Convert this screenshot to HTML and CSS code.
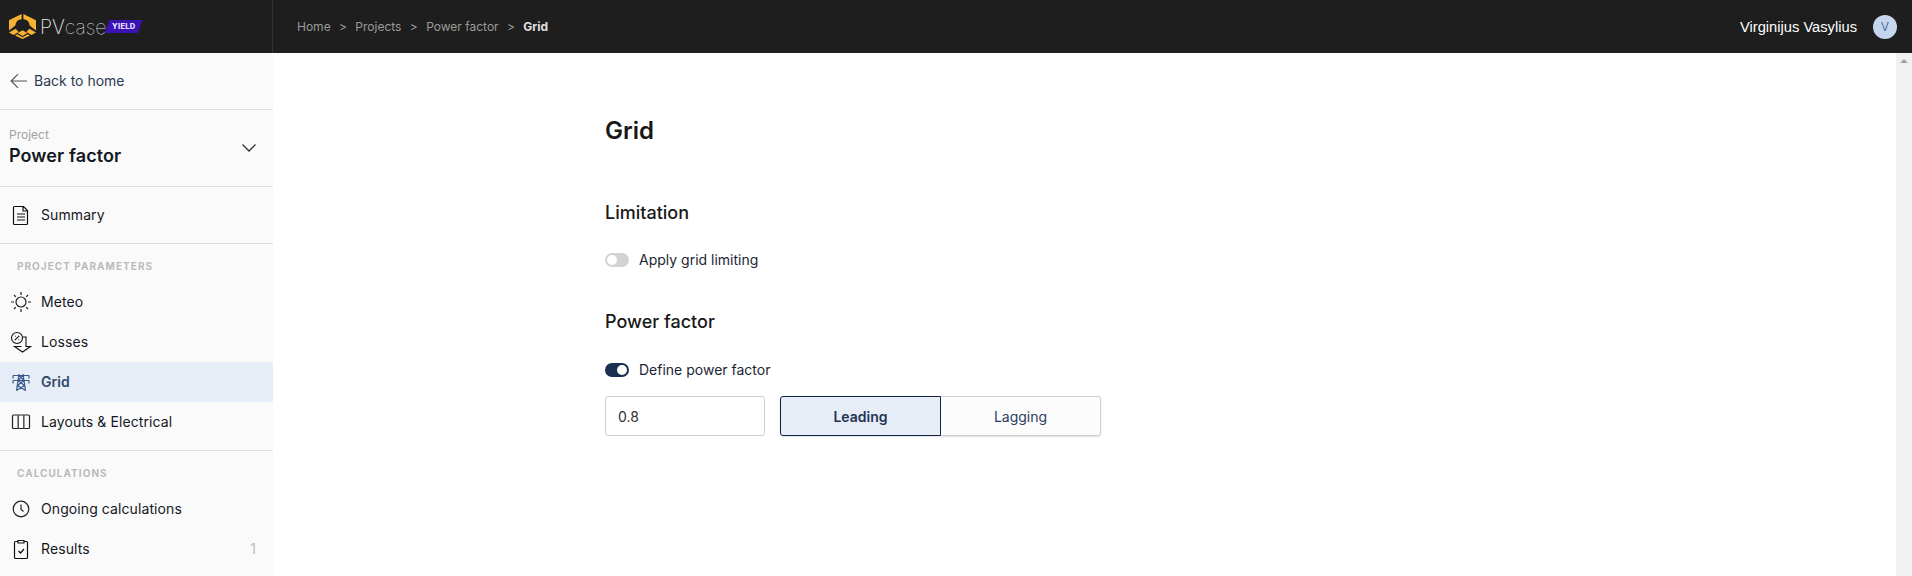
FILE: index.html
```html
<!DOCTYPE html>
<html lang="en">
<head>
<meta charset="utf-8">
<title>Grid</title>
<link rel="stylesheet" href="styles.css">
</head>
<body>
<header class="topbar">
  <div class="brand">
    <svg class="logo-mark" width="27" height="25" viewBox="0 0 27 25">
      <path fill="#f5b335" d="M12.600 0v5.300a7 7 0 0 0-6.300 6.200L0 16.500V6.300z"/>
      <path fill="#f5b335" d="M14.400 0v5.300a7 7 0 0 1 6.300 6.200L27 16.500V6.300z"/>
      <path fill="#f5b335" d="M0 18.400l6.700-3.700 3 3.200-5.200 3z"/>
      <path fill="#f5b335" d="M27 18.400l-6.700-3.700-3 3.200 5.200 3z"/>
      <path fill="#f5b335" d="M13.500 16.200l4.900 2.900-4.900 2.800-4.900-2.800z"/>
      <path fill="#f5b335" d="M6 21.400l7.500 3.600 7.500-3.600-2.200-1.200-5.300 3-5.300-3z"/>
    </svg>
    <span class="logo-word"><span class="logo-pv">PV</span>case</span>
    <span class="logo-tag"><span class="logo-tag-text">YIELD</span></span>
  </div>
  <nav class="crumbs">
    <span>Home</span><span class="sep">&gt;</span>
    <span>Projects</span><span class="sep">&gt;</span>
    <span>Power factor</span><span class="sep">&gt;</span>
    <span class="crumb-current">Grid</span>
  </nav>
  <div class="user">
    <span class="user-name">Virginijus Vasylius</span>
    <span class="avatar">V</span>
  </div>
</header>
<div class="shell">
  <aside class="sidebar">
    <div class="back">
      <svg width="18" height="16" viewBox="0 0 18 16" fill="none" stroke="#555" stroke-width="1.2"><path d="M17 8H1.500M8 1.200L1.200 8 8 14.800"/></svg>
      <span class="label">Back to home</span>
    </div>
    <div class="project">
      <div class="project-text">
        <div class="project-label">Project</div>
        <div class="project-name">Power factor</div>
      </div>
      <svg width="16" height="10" viewBox="0 0 16 10" fill="none" stroke="#333" stroke-width="1.3"><path d="M1.500 1.500L8 8l6.500-6.500"/></svg>
    </div>
    <div class="section section-summary">
      <a class="item">
        <svg class="icon" width="24" height="24" viewBox="0 0 24 24" fill="none" stroke="#111" stroke-width="1.2"><path d="M5.500 3.500h9l4 4v13a1 1 0 0 1-1 1h-12a1 1 0 0 1-1-1v-16a1 1 0 0 1 1-1zM14 3.500v4.500h4.500M8 11h8M8 14h8M8 17h8"/></svg>
        <span class="label">Summary</span>
      </a>
    </div>
    <div class="section">
      <div class="section-title">Project parameters</div>
      <a class="item">
        <svg class="icon" width="24" height="24" viewBox="0 0 24 24" fill="none" stroke="#222" stroke-width="1.2"><circle cx="12" cy="12" r="5"/><path d="M12 2v3M12 19v3M2 12h3M19 12h3M5 5l1.800 1.800M17.200 17.200L19 19M5 19l1.800-1.800M17.200 6.800L19 5"/></svg>
        <span class="label">Meteo</span>
      </a>
      <a class="item">
        <svg class="icon" width="24" height="24" viewBox="0 0 24 24" fill="none" stroke="#111" stroke-width="1.1"><circle cx="8" cy="8" r="5.500"/><path d="M5.800 10.200L10.200 5.800M6 6.300h.7M9.500 9.700h.7M14 7h3v9.500h4.500L13.500 22l-8-5.500h7"/></svg>
        <span class="label">Losses</span>
      </a>
      <a class="item item-active">
        <svg class="icon" width="24" height="24" viewBox="0 0 24 24" fill="none" stroke="#3a5a88" stroke-width="1.200"><path d="M4 5.500h16M4 10.500h16M4 5.500v3M20 5.500v3M4 10.500v3M20 10.500v3M10 4L7.500 20.500M14 4l2.500 16.500M10 5.500l5 5-6.500 5 8 5M14 5.500l-5 5 6.500 5-8 5"/></svg>
        <span class="label">Grid</span>
      </a>
      <a class="item">
        <svg class="icon" width="24" height="24" viewBox="0 0 24 24" fill="none" stroke="#222" stroke-width="1.2"><rect x="3.500" y="5" width="17" height="13.500" rx="1"/><path d="M9.200 5v13.500M14.800 5v13.500" stroke-width="1.600" stroke="#555"/></svg>
        <span class="label">Layouts &amp; Electrical</span>
      </a>
    </div>
    <div class="section section-last">
      <div class="section-title">Calculations</div>
      <a class="item">
        <svg class="icon" width="24" height="24" viewBox="0 0 24 24" fill="none" stroke="#222" stroke-width="1.2"><circle cx="12" cy="12" r="7.800"/><path d="M12 7.500v5l2.500 2"/></svg>
        <span class="label">Ongoing calculations</span>
      </a>
      <a class="item">
        <svg class="icon" width="24" height="24" viewBox="0 0 24 24" fill="none" stroke="#111" stroke-width="1.2"><path d="M9 4.500H6.500a1 1 0 0 0-1 1v15a1 1 0 0 0 1 1h11a1 1 0 0 0 1-1v-15a1 1 0 0 0-1-1H15M9 3.500h6v2.500H9zM9.500 14l2 2 3.500-4"/></svg>
        <span class="label">Results</span>
        <span class="label count">1</span>
      </a>
    </div>
  </aside>
  <main class="content">
    <h1 class="page-title">Grid</h1>
    <h2 class="group-title group-limit">Limitation</h2>
    <div class="switch-row">
      <span class="switch"></span>
      <span class="label">Apply grid limiting</span>
    </div>
    <h2 class="group-title group-power">Power factor</h2>
    <div class="switch-row">
      <span class="switch switch-on"></span>
      <span class="label">Define power factor</span>
    </div>
    <div class="controls">
      <div class="field">0.8</div>
      <div class="segments">
        <span class="segment segment-on">Leading</span>
        <span class="segment">Lagging</span>
      </div>
    </div>
  </main>
  <div class="scrollbar"><span class="scroll-arrow"></span></div>
</div>
</body>
</html>
```
FILE: styles.css
```css
* { box-sizing: border-box; }
html, body { margin: 0; height: 100%; overflow: hidden; }
body {
  font-family: Inter, "Liberation Sans", sans-serif;
  font-size: 14px;
  color: #14181f;
  background: #fff;
  display: flex;
  flex-direction: column;
}
.label { margin-bottom: 2px; }
.topbar {
  height: 53px;
  flex: none;
  background: #1e1e1e;
  color: #fff;
  display: flex;
  align-items: center;
}
.brand {
  width: 273px;
  height: 100%;
  flex: none;
  border-right: 1px solid #333;
  display: flex;
  align-items: center;
  padding-left: 9px;
}
.logo-mark { flex: none; }
.logo-word {
  font-family: Inter, sans-serif;
  font-weight: 100;
  font-size: 19.500px;
  color: #e4e4e4;
  margin-left: 4px;
  width: 65px;
  flex: none;
}
.logo-pv { font-weight: 200; }
.logo-tag {
  width: 33px;
  height: 13px;
  margin-left: 2px;
  background: #3b12b4;
  transform: skewX(-20deg);
  display: flex;
  align-items: center;
  justify-content: center;
}
.logo-tag-text {
  transform: skewX(20deg);
  font-size: 7.500px;
  font-weight: 800;
  letter-spacing: 0.300px;
  color: #e5e0ff;
}
.crumbs {
  display: flex;
  align-items: center;
  padding-left: 24px;
  font-size: 12px;
  color: #9b9b9b;
}
.sep { margin: 0 8.400px; }
.crumb-current { color: #e0e0e0; font-weight: 700; }
.user {
  margin-left: auto;
  display: flex;
  align-items: center;
  padding-right: 15px;
}
.user-name {
  font-size: 14.700px;
  font-family: "Liberation Sans", Arial, sans-serif;
  color: #fff;
}
.avatar {
  width: 24px;
  height: 24px;
  margin-left: 16px;
  border-radius: 50%;
  background: #c5d7ee;
  color: #4f6f9f;
  font-size: 12px;
  display: flex;
  align-items: center;
  justify-content: center;
}
.shell { flex: 1; display: flex; min-height: 0; }
.sidebar {
  width: 273px;
  flex: none;
  background: #fafafa;
}
.back {
  height: 57px;
  display: flex;
  align-items: center;
  gap: 6px;
  padding-left: 10px;
  border-bottom: 1px solid #dedede;
  color: #2a3a52;
  font-size: 14px;
}
.project {
  height: 77px;
  border-bottom: 1px solid #dedede;
  display: flex;
  align-items: center;
  justify-content: space-between;
  padding: 0 16px 0 9px;
}
.project-text { padding-bottom: 3px; }
.project-label { font-size: 12px; line-height: 19px; color: #a3a3a3; }
.project-name { font-size: 18px; line-height: 24px; font-weight: 600; letter-spacing: 0.100px; color: #14181f; }
.section { border-bottom: 1px solid #dedede; padding-bottom: 8px; }
.section-summary { padding: 8px 0 8px; }
.section-last { border-bottom: 0; }
.section-title {
  font-size: 10px;
  font-weight: 700;
  letter-spacing: 1.030px;
  line-height: 14px;
  text-transform: uppercase;
  color: #bababa;
  padding: 15px 0 9px 17px;
}
.item {
  height: 40px;
  display: flex;
  align-items: center;
  gap: 8px;
  padding: 0 17px 0 9px;
  color: #14181f;
  font-size: 14px;
  letter-spacing: 0.090px;
}
.icon { flex: none; }
.item-active { background: #e6edf7; color: #33496b; font-weight: 600; }
.count { margin-left: auto; color: #bdbdbd; }
.content { flex: 1; padding: 63px 0 0 332px; min-width: 0; }
.page-title {
  margin: 0;
  font-size: 24px;
  line-height: 30px;
  font-weight: 600;
  color: #181818;
}
.group-title {
  margin: 0;
  font-size: 18px;
  line-height: 24px;
  font-weight: 500;
  color: #181818;
}
.group-limit { margin-top: 55px; }
.group-power { margin-top: 38px; }
.switch-row {
  display: flex;
  align-items: center;
  gap: 10px;
  margin-top: 24px;
  height: 24px;
  color: #1c2635;
  font-size: 14px;
}
.group-limit + .switch-row { margin-top: 23px; }
.switch {
  position: relative;
  width: 24px;
  height: 14px;
  border-radius: 7px;
  background: #d3d3d3;
}
.switch::after {
  content: "";
  position: absolute;
  left: 2px;
  top: 2px;
  width: 10px;
  height: 10px;
  border-radius: 50%;
  background: #fff;
}
.switch-on { background: #1a3052; }
.switch-on::after { left: 12px; }
.controls { display: flex; gap: 15px; margin-top: 14px; }
.field {
  width: 160px;
  height: 40px;
  border: 1px solid #d0d0d0;
  border-radius: 3px;
  padding-left: 12px;
  display: flex;
  align-items: center;
  font-size: 14px;
  color: #333;
}
.segments {
  display: flex;
  width: 321px;
  height: 40px;
  border-radius: 3px;
  box-shadow: 0 1px 2px rgba(0,0,0,.12);
}
.segment {
  flex: 1;
  display: flex;
  align-items: center;
  justify-content: center;
  border: 1px solid #d0d0d0;
  border-left: 0;
  border-radius: 0 3px 3px 0;
  background: #fcfcfc;
  color: #2a3d5c;
  font-size: 14px;
}
.segment-on {
  border: 1px solid #0f2444;
  border-radius: 3px 0 0 3px;
  background: #e6edf7;
  color: #1f3454;
  font-weight: 600;
}
.scrollbar {
  width: 16px;
  flex: none;
  background: #f1f1f1;
  display: flex;
  justify-content: center;
  padding-top: 6px;
}
.scroll-arrow {
  width: 0;
  height: 0;
  border-left: 4px solid transparent;
  border-right: 4px solid transparent;
  border-bottom: 4px solid #a3a3a3;
}
```
